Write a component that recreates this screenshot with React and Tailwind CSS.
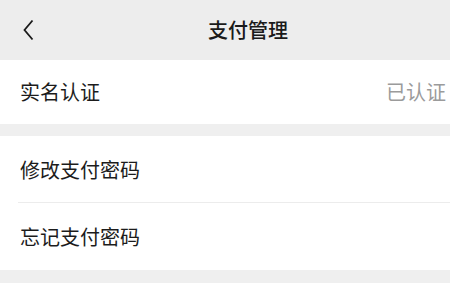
import React from 'react';

const font = { fontFamily: '"Noto Sans CJK SC", "Noto Sans", sans-serif' };

const Row = ({ label, value, divider }) => (
  <div className="relative flex h-[67px] items-center justify-between bg-white pl-[20px] pr-[4px]">
    <span className="text-[20px] leading-none text-[#1c1c1c]">{label}</span>
    {value && <span className="text-[20px] leading-none text-[#9b9b9b]">{value}</span>}
    {divider && <div className="absolute bottom-0 left-[18px] right-0 h-px bg-[#ececec]" />}
  </div>
);

export default function App() {
  return (
    <div className="h-[300px] w-[450px] overflow-hidden bg-white" style={font}>
      <div className="flex h-[60px] items-center bg-[#ededed]">
        <div className="flex w-[208px] items-center pl-[23px]">
          <svg width="11" height="22" viewBox="0 0 11 22" fill="none">
            <path d="M9.5 1.5 L1.5 11 L9.5 20.5" stroke="#1a1a1a" strokeWidth="1.8" strokeLinejoin="miter" />
          </svg>
        </div>
        <span className="text-[20px] font-medium leading-none text-[#1a1a1a]">支付管理</span>
      </div>

      <div className="h-[64px] bg-white">
        <div className="flex h-full items-center justify-between pl-[20px] pr-[4px]">
          <span className="text-[20px] leading-none text-[#1c1c1c]">实名认证</span>
          <span className="text-[20px] leading-none text-[#9b9b9b]">已认证</span>
        </div>
      </div>

      <div className="h-[12px] bg-[#efefef]" />

      <div className="flex flex-col">
        <Row label="修改支付密码" divider />
        <Row label="忘记支付密码" />
      </div>

      <div className="h-[13px] bg-[#efefef]" />
    </div>
  );
}
